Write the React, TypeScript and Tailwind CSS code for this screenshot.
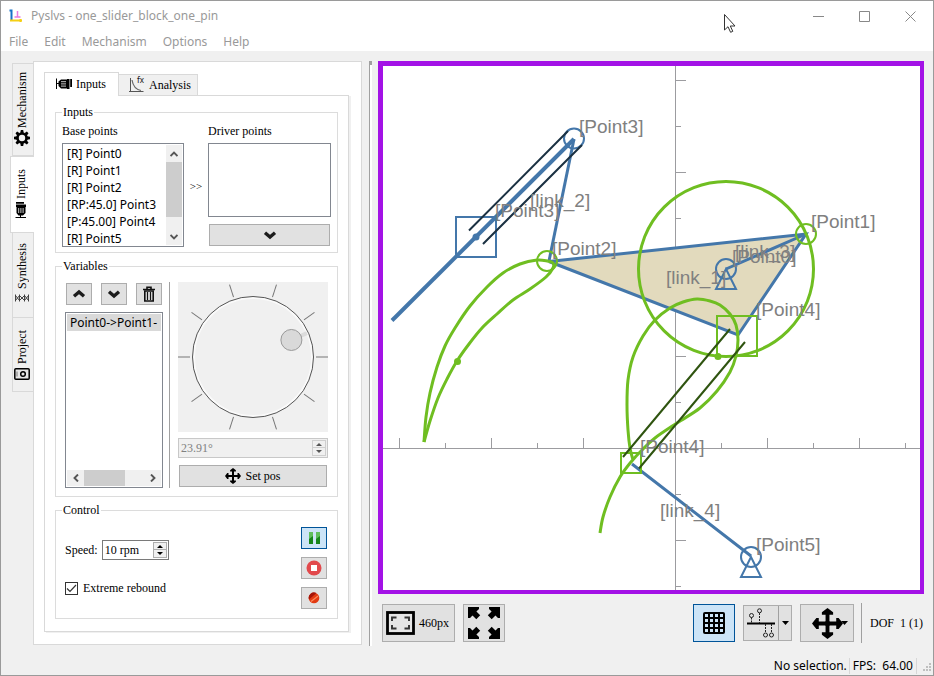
import React, { useState } from "react";
import type { ReactNode } from "react";

const sans = "font-['Noto_Sans','Open_Sans',sans-serif]";
const serif = "font-['Liberation_Serif','Noto_Sans_CJK_TC',serif]";

/* ---------- icons ---------- */

function LogoIcon() {
  return (
    <svg width="14" height="14" viewBox="0 0 14 14" aria-hidden="true">
      <path d="M0.500 1.500h3M2.500 1v11" stroke="#1773c8" strokeWidth="2" fill="none" />
      <path d="M1 11.500h12M11.500 10v3" stroke="#f5cf14" strokeWidth="2" fill="none" />
      <path d="M8.500 2v6M5.500 8h6" stroke="#e77be0" strokeWidth="1.500" fill="none" />
    </svg>
  );
}

function MotorIcon({ className = "" }: { className?: string }) {
  return (
    <svg width="16" height="12" viewBox="0 0 16 12" className={className} aria-hidden="true">
      <path d="M0.500 0.500v10.500M0.500 5.500h3" stroke="#000" fill="none" />
      <path d="M2.500 3.500L5 1.500h6.500v9H5L2.500 8z" fill="#000" />
      <path d="M5 3.700h5M5 5.900h5M5 8.100h5" stroke="#fff" strokeWidth="0.800" />
      <path d="M11 1h2.500v10H11zM14.200 1H16v8h-1.800z" fill="#000" />
    </svg>
  );
}

function GearIcon() {
  return (
    <svg width="16" height="16" viewBox="-8 -8 16 16" aria-hidden="true">
      <circle r="4.500" fill="none" stroke="#000" strokeWidth="2.600" />
      {[0, 45, 90, 135, 180, 225, 270, 315].map((a) => (
        <path key={a} d="M-1.700 -5L-1.200 -8h2.400L1.700 -5z" transform={`rotate(${a})`} fill="#000" />
      ))}
    </svg>
  );
}

function LinkageIcon() {
  return (
    <svg width="14" height="8" viewBox="0 0 14 8" aria-hidden="true">
      <path d="M0.500 0.500v7M13.500 0.500v7M4.500 0.500v7M9.500 0.500v7M0.500 1.500L4.500 6.500M0.500 6.500L4.500 1.500M9.500 1.500l4 5M9.500 6.500l4-5M4.500 1.500L7 4l2.500-2.500M4.500 6.500L7 4l2.500 2.500" stroke="#333" strokeWidth="0.900" fill="none" />
    </svg>
  );
}

function ProjectIcon() {
  return (
    <svg width="16" height="12" viewBox="0 0 16 12" aria-hidden="true">
      <rect x="0.800" y="0.800" width="14.400" height="10.400" rx="1" fill="#e6e6e6" stroke="#000" strokeWidth="1.500" />
      <circle cx="9" cy="6" r="2.300" fill="none" stroke="#000" strokeWidth="1.500" />
      <path d="M3 3.500v5" stroke="#777" strokeWidth="1" />
    </svg>
  );
}

function ChartIcon() {
  return (
    <svg width="16" height="16" viewBox="0 0 16 16" className="overflow-visible" aria-hidden="true">
      <path d="M1.500 1v13.500M0 14.500h14.500" stroke="#555" fill="none" />
      <path d="M3 3c1 6 3.500 9.500 9 10.500" stroke="#666" strokeWidth="1.200" fill="none" />
      <text x="8" y="6" fontSize="8" fontFamily="Noto Sans, sans-serif" fill="#111">fx</text>
    </svg>
  );
}

function Chevron({ up = false }: { up?: boolean }) {
  return (
    <svg width="14" height="10" viewBox="0 0 14 10" aria-hidden="true">
      <path d={up ? "M2 7.200L7 3l5 4.200" : "M2 2.800L7 7l5-4.200"} stroke="#1c1c1c" strokeWidth="3.400" fill="none" />
    </svg>
  );
}

function ThinArrow({ className = "" }: { className?: string }) {
  return (
    <svg width="8" height="8" viewBox="0 0 8 8" className={className} aria-hidden="true">
      <path d="M0.500 6L4 2.500l3.500 3.500" stroke="#555" strokeWidth="1.900" fill="none" />
    </svg>
  );
}

function TrashIcon() {
  return (
    <svg width="12" height="16" viewBox="0 0 12 16" aria-hidden="true">
      <path d="M0 3.500h12M4 3V1.200h4V3" stroke="#111" strokeWidth="1.600" fill="none" />
      <path d="M1.800 5h8.400v10H1.800z" stroke="#111" strokeWidth="1.600" fill="none" />
      <path d="M4.500 6v8M7.500 6v8" stroke="#111" strokeWidth="1.200" />
    </svg>
  );
}

function MoveIcon({ size }: { size: number }) {
  return (
    <svg width={size} height={size} viewBox="-16 -16 32 32" aria-hidden="true">
      {[0, 90, 180, 270].map((a) => (
        <path key={a} d="M-2 2V-9h-3.800v-2.500L0 -16l5.800 4.500V-9H2V2z" transform={`rotate(${a})`} fill="#000" />
      ))}
    </svg>
  );
}

function FitIcon() {
  return (
    <svg width="29" height="24" viewBox="0 0 29 24" aria-hidden="true">
      <rect x="1.500" y="1.500" width="26" height="21" fill="#e6e6e6" stroke="#000" strokeWidth="2.800" />
      <path d="M6 10V6.500h4.500M18.500 6.500H23V10M23 14v3.500h-4.500M10.500 17.500H6V14" stroke="#333" strokeWidth="1.900" fill="none" />
    </svg>
  );
}

function ExpandIcon() {
  return (
    <svg width="32" height="32" viewBox="-16 -16 32 32" aria-hidden="true">
      {[0, 90, 180, 270].map((a) => (
        <path key={a} d="M-16 -16h11v2l-2.600 2.500 3.800 3.800-3.900 3.900-3.800-3.800L-14 -5H-16z" transform={`rotate(${a})`} fill="#000" />
      ))}
    </svg>
  );
}

function GridIcon() {
  return (
    <svg width="22" height="22" viewBox="0 0 22 22" aria-hidden="true">
      <rect width="22" height="22" rx="2" fill="#000" />
      {[2, 7, 12, 17].map((y) =>
        [2, 7, 12, 17].map((x) => <rect key={`${x}-${y}`} x={x} y={y} width="3" height="3" fill="#cce4f7" />)
      )}
    </svg>
  );
}

function SequenceIcon() {
  return (
    <svg width="28" height="30" viewBox="0 0 28 30" aria-hidden="true">
      <path d="M0 15.500h28" stroke="#000" strokeWidth="2" />
      <g fill="none" stroke="#222">
        <path d="M4.500 9.500v6M12.500 5v10M18.500 16v8.500M24.500 16v8.500" strokeDasharray="2 1" />
        <circle cx="4.500" cy="7.500" r="2" />
        <circle cx="12.500" cy="2.800" r="2" />
        <circle cx="18.500" cy="27" r="2" />
        <circle cx="24.500" cy="27" r="2" />
      </g>
    </svg>
  );
}

function DropArrow() {
  return (
    <svg width="7" height="4" viewBox="0 0 7 4" aria-hidden="true">
      <path d="M0 0h7L3.500 4z" fill="#000" />
    </svg>
  );
}

/* ---------- small controls ---------- */

function PushButton({ label, className = "", children }: { label?: string; className?: string; children: ReactNode }) {
  return (
    <button
      type="button"
      aria-label={label}
      className={`flex items-center justify-center border border-[#adadad] bg-[#e1e1e1] ${className}`}
    >
      {children}
    </button>
  );
}

function SpinArrows({ color, border }: { color: string; border: string }) {
  return (
    <span className="flex w-3.5 flex-col">
      <button type="button" aria-label="Increase" className={`flex h-2 items-center justify-center border bg-[#f0f0f0] ${border}`}>
        <svg width="6" height="3" viewBox="0 0 6 3"><path d="M0 3h6L3 0z" fill={color} /></svg>
      </button>
      <button type="button" aria-label="Decrease" className={`flex h-2 items-center justify-center border border-t-0 bg-[#f0f0f0] ${border}`}>
        <svg width="6" height="3" viewBox="0 0 6 3"><path d="M0 0h6L3 3z" fill={color} /></svg>
      </button>
    </span>
  );
}

function Group({ title, className = "", children }: { title: string; className?: string; children: ReactNode }) {
  return (
    <fieldset className="min-w-0 border border-[#dcdcdc]">
      <legend className="ml-1.5 px-px leading-4">{title}</legend>
      <div className={className}>{children}</div>
    </fieldset>
  );
}

function SideTab({ title, icon, selected = false, className }: { title: string; icon: ReactNode; selected?: boolean; className: string }) {
  return (
    <button
      type="button"
      role="tab"
      aria-selected={selected}
      className={`flex flex-col items-center border-[#d9d9d9] ${
        selected ? "z-10 -mr-px w-6 border-y border-l bg-white pr-1" : "w-[21px] border-b border-l bg-[#f0f0f0] pr-0.5"
      } ${className}`}
    >
      <span className="rotate-180 leading-4 [writing-mode:vertical-rl]">{title}</span>
      {icon}
    </button>
  );
}

/* ---------- input panel ---------- */

const basePoints = ["[R] Point0", "[R] Point1", "[R] Point2", "[RP:45.0] Point3", "[P:45.00] Point4", "[R] Point5"];

function InputsGroup() {
  return (
    <Group title="Inputs" className="flex px-1.5 pt-[3px] pb-[5px]">
      <div className="flex w-[122px] flex-col gap-1">
        <span id="base-points" className="leading-4">Base points</span>
        <div className="flex h-[104px] border border-[#828790] bg-white p-px">
          <ul role="listbox" aria-labelledby="base-points" className={`min-w-0 flex-1 overflow-hidden ${sans}`}>
            {basePoints.map((p) => (
              <li key={p} role="option" aria-selected="false" className="pl-[3px] leading-[17px] whitespace-nowrap">
                {p}
              </li>
            ))}
          </ul>
          <div className="flex w-4 flex-col bg-[#f0f0f0]">
            <button type="button" aria-label="Scroll up" className="flex h-[17px] items-center justify-center"><ThinArrow /></button>
            <div className="h-[55px] bg-[#cdcdcd]" />
            <button type="button" aria-label="Scroll down" className="mt-auto flex h-[17px] items-center justify-center"><ThinArrow className="rotate-180" /></button>
          </div>
        </div>
      </div>
      <span className="w-6 self-center pt-0.5 text-center text-[11px]">&gt;&gt;</span>
      <div className="flex flex-1 flex-col">
        <span id="driver-points" className="leading-4">Driver points</span>
        <ul role="listbox" aria-labelledby="driver-points" className="mt-1 h-[74px] border border-[#828790] bg-white" />
        <PushButton label="Remove driver" className="mx-px mt-[7px] h-[22px]"><Chevron /></PushButton>
      </div>
    </Group>
  );
}

function Dial({ angle, onChange }: { angle: number; onChange: (v: number) => void }) {
  const rad = (angle * Math.PI) / 180;
  const cx = Math.cos(rad);
  const cy = -Math.sin(rad);
  return (
    <label className="relative block bg-[#f0f0f0]">
      <svg viewBox="-75 -75 150 150" className="block w-full" aria-hidden="true">
        <circle r="59" fill="none" stroke="#fafafa" strokeWidth="2" />
        <circle r="60.500" fill="none" stroke="#555" />
        {[0, 36, 72, 108, 144, 180, 216, 252, 288, 324].map((a) => (
          <path key={a} d="M63 0H76" stroke="#777" transform={`rotate(${a})`} />
        ))}
        <path d={`M${cx * 50} ${cy * 50}L${cx * 59} ${cy * 59}`} stroke="#dcdcdc" strokeWidth="4" />
        <circle cx={cx * 42} cy={cy * 42} r="10.500" fill="#d9d9d9" stroke="#999" />
      </svg>
      <input
        type="range"
        aria-label="Angle"
        min="0"
        max="360"
        step="0.01"
        value={angle}
        onChange={(e) => onChange(Number(e.target.value))}
        className="absolute inset-0 h-full w-full opacity-0"
      />
    </label>
  );
}

function VariablesGroup() {
  const [angle, setAngle] = useState(23.91);
  return (
    <Group title="Variables" className="flex px-[9px] py-2">
      <div className="flex w-[98px] flex-col gap-[7px] pt-px">
        <div className="flex justify-between px-px">
          <PushButton label="Move up" className="h-[22px] w-[26px]"><Chevron up /></PushButton>
          <PushButton label="Move down" className="h-[22px] w-[26px]"><Chevron /></PushButton>
          <PushButton label="Delete" className="h-[22px] w-[26px]"><TrashIcon /></PushButton>
        </div>
        <div className="flex flex-1 flex-col border border-[#828790] bg-white p-px">
          <ul role="listbox" aria-label="Variables" className={`min-h-0 flex-1 overflow-hidden ${sans}`}>
            <li role="option" aria-selected="true" className="overflow-hidden bg-[#d9d9d9] pl-[3px] leading-[17px] whitespace-nowrap">
              Point0-&gt;Point1-
            </li>
          </ul>
          <div className="flex h-4 bg-[#f0f0f0]">
            <button type="button" aria-label="Scroll left" className="flex w-[17px] items-center justify-center"><ThinArrow className="-rotate-90" /></button>
            <div className="w-[41px] bg-[#cdcdcd]" />
            <button type="button" aria-label="Scroll right" className="ml-auto flex w-[17px] items-center justify-center"><ThinArrow className="rotate-90" /></button>
          </div>
        </div>
      </div>
      <div className="mr-2 ml-1.5 w-px bg-[#a0a0a0]" />
      <div className="flex flex-1 flex-col">
        <Dial angle={angle} onChange={setAngle} />
        <div className="mt-1.5 flex h-5 items-center border border-[#c8c8c8] bg-[#f0f0f0] pr-px">
          <input aria-label="Angle value" disabled value={`${angle.toFixed(2)}°`} readOnly className="w-0 flex-1 bg-transparent pl-0.5 leading-4 text-[#808080]" />
          <SpinArrows color="#555" border="border-[#cfcfcf]" />
        </div>
        <PushButton className="mx-px mt-[7px] mb-px h-[22px] gap-1">
          <MoveIcon size={16} />
          Set pos
        </PushButton>
      </div>
    </Group>
  );
}

function ControlGroup() {
  const [rebound, setRebound] = useState(true);
  return (
    <Group title="Control" className="flex justify-between py-[9px] pr-2.5 pl-[9px]">
      <div className="flex flex-col gap-5 pt-[13px]">
        <div className="flex items-center gap-1">
          <label htmlFor="speed">Speed:</label>
          <div className="flex h-5 w-[67px] items-center border border-[#7a7a7a] bg-white pr-px">
            <input id="speed" defaultValue="10 rpm" className="w-0 flex-1 bg-transparent pl-0.5 leading-4 outline-none" />
            <SpinArrows color="#000" border="border-[#adadad]" />
          </div>
        </div>
        <label className="flex items-center gap-[5px] leading-4">
          <span className="relative flex h-[13px] w-[13px]">
            <input type="checkbox" checked={rebound} onChange={() => setRebound(!rebound)} className="h-full w-full appearance-none border border-[#333] bg-white" />
            {rebound && (
              <svg viewBox="0 0 13 13" className="pointer-events-none absolute inset-0" aria-hidden="true">
                <path d="M2 6.500L5 9.500l6-6.500" stroke="#333" strokeWidth="1.200" fill="none" />
              </svg>
            )}
          </span>
          Extreme rebound
        </label>
      </div>
      <div className="flex flex-col gap-2">
        <button type="button" aria-label="Pause" className="flex h-[22px] w-[26px] items-center justify-center border border-[#005499] bg-[#cce4f7]">
          <svg width="11" height="12" viewBox="0 0 11 12">
            <path d="M0 0h4v12H0zM7 0h4v12H7z" fill="#5fbf5c" />
            <path d="M0 7l4-3v8H0zM7 7l4-3v8H7z" fill="#15851a" />
          </svg>
        </button>
        <PushButton label="Stop" className="h-[22px] w-[26px]">
          <svg width="16" height="16" viewBox="0 0 16 16">
            <circle cx="8" cy="8" r="7.500" fill="#e2494c" />
            <rect x="5" y="5" width="6" height="6" fill="#fff" />
          </svg>
        </PushButton>
        <PushButton label="Record" className="h-[22px] w-[26px]">
          <svg width="12" height="12" viewBox="0 0 12 12">
            <circle cx="6" cy="6" r="5.300" fill="#e23a12" />
            <path d="M1 7.500L8.500 1A5.300 5.300 0 0 0 1 7.500z" fill="#a61508" />
            <path d="M3 9.500L10 4" stroke="#ff8a5c" strokeWidth="1.200" />
          </svg>
        </PushButton>
      </div>
    </Group>
  );
}

/* ---------- canvas ---------- */

type Pt = [number, number];

function smooth(points: Pt[]) {
  let d = `M${points[0][0]} ${points[0][1]}`;
  for (let i = 0; i < points.length - 1; i++) {
    const p0 = points[Math.max(i - 1, 0)];
    const p1 = points[i];
    const p2 = points[i + 1];
    const p3 = points[Math.min(i + 2, points.length - 1)];
    d += `C${p1[0] + (p2[0] - p0[0]) / 6} ${p1[1] + (p2[1] - p0[1]) / 6} ${p2[0] - (p3[0] - p1[0]) / 6} ${p2[1] - (p3[1] - p1[1]) / 6} ${p2[0]} ${p2[1]}`;
  }
  return d;
}

const point2Out: Pt[] = [[548, 261], [537, 260], [520, 264], [503, 273], [487, 287], [470, 306], [455, 328], [445, 346], [437, 367], [430, 393], [426, 417], [424, 442]];
const point2Back: Pt[] = [[424, 442], [430, 421], [438, 398], [447, 379], [457, 361], [469, 344], [482, 328], [497, 314], [513, 300], [530, 289], [546, 277], [553, 268], [553, 263], [548, 261]];
const point4Path: Pt[] = [
  [600, 533], [603, 517], [610, 497], [620, 477], [631, 462], [642, 450], [655, 438], [677, 423], [700, 408], [717, 391], [730, 372],
  [736, 356], [738, 340], [736, 325], [730, 314], [720, 305], [710, 301], [697, 299], [683, 302], [670, 308], [655, 320], [643, 336],
  [633, 357], [628, 380], [627, 405], [628, 430], [630, 448], [633, 460],
];

const labels: [string, number, number][] = [
  ["[Point3]", 579, 133],
  ["[link_2]", 530, 207],
  ["[Point3]", 495, 217],
  ["[Point2]", 552, 255],
  ["[Point1]", 811, 228],
  ["[link_3]", 735, 258],
  ["[Point0]", 732, 263],
  ["[link_1]", 666, 284],
  ["[Point4]", 756, 316],
  ["[Point4]", 640, 453],
  ["[link_4]", 660, 517],
  ["[Point5]", 756, 551],
];

const xTicks = [399, 445, 491, 537, 583, 629, 721, 767, 813, 859, 905];
const yTicks = [80, 126, 172, 218, 264, 310, 356, 402, 494, 540, 586];

function MechanismCanvas() {
  return (
    <div className="min-h-0 flex-1 border-t-[5px] border-r-4 border-b-4 border-l-[5px] border-[#a312e6] bg-white">
      <svg viewBox="383 66 537 524" className="block h-full w-full" role="img" aria-label="Mechanism">
        <g fill="none">
          <g stroke="#9c9ca0" strokeWidth="1" shapeRendering="crispEdges">
            <path d="M383 448.500H920M675.500 66V590" />
            {xTicks.map((x, i) => (
              <path key={x} d={`M${x + 0.5} 448V${[0, 2, 4, 7, 9].includes(i) ? 438 : 443}`} />
            ))}
            {yTicks.map((y, i) => (
              <path key={y} d={`M676 ${y + 0.5}H${[0, 2, 4, 6, 9].includes(i) ? 686 : 681}`} />
            ))}
          </g>
          <g stroke="#4477aa" strokeWidth="3">
            <path d="M549 261.500L806 234L738 335z" fill="#e2dabd" />
            <path d="M574 139L549 261" />
            <path d="M392 320.500L574 139" strokeWidth="4" />
            <path d="M726 269L806 234M632 464L751 556" />
          </g>
          <g stroke="#4477aa" strokeWidth="2">
            <rect x="456" y="217" width="40" height="40" />
            <circle cx="574" cy="138.500" r="10" />
            <circle cx="726" cy="269" r="10" />
            <path d="M726 269L716 289H736z" />
            <circle cx="751" cy="557" r="10" />
            <path d="M751 557L741 577H761z" />
          </g>
          <circle cx="476" cy="237" r="3.500" fill="#4477aa" />
          <g stroke="#1b3142" strokeWidth="2">
            <path d="M469 230.500L568 131M483 244L582 145" />
          </g>
          <g stroke="#6fbe21" strokeWidth="3">
            <circle cx="726" cy="269" r="87.500" />
            <path d={smooth(point2Out)} />
            <path d={smooth(point2Back)} />
            <path d={smooth(point4Path)} />
          </g>
          <g stroke="#6fbe21" strokeWidth="2">
            <circle cx="806" cy="234" r="10" />
            <circle cx="547" cy="261" r="10" />
            <rect x="717" y="316" width="40" height="40" />
            <rect x="621" y="453" width="20" height="20" />
          </g>
          <circle cx="457.500" cy="361.500" r="3.500" fill="#6fbe21" />
          <circle cx="718" cy="356.500" r="3.500" fill="#6fbe21" />
          <g stroke="#2f5410" strokeWidth="2">
            <path d="M623 457L730 329M639 468.500L745 342" />
          </g>
        </g>
        <g fill="#808080" fontSize="19" fontFamily="Liberation Sans, Arial, sans-serif">
          {labels.map(([t, x, y]) => (
            <text key={`${t}${x}`} x={x} y={y}>{t}</text>
          ))}
        </g>
      </svg>
    </div>
  );
}

function ViewToolbar() {
  return (
    <div className="mt-[9px] mb-[13px] flex h-10 items-center gap-2 pl-1">
      <PushButton className="h-[38px] w-[73px] gap-1 pr-0.5">
        <FitIcon />
        460px
      </PushButton>
      <PushButton label="Zoom to fit" className="h-[38px] w-[42px]"><ExpandIcon /></PushButton>
      <button type="button" aria-label="Grid" aria-pressed="true" className="ml-auto flex h-[38px] w-[42px] items-center justify-center border border-[#005499] bg-[#cce4f7]">
        <GridIcon />
      </button>
      <div className="flex h-9 w-[49px] border border-[#adadad] bg-[#e1e1e1]">
        <button type="button" aria-label="Sequence" className="flex flex-1 items-center justify-center border-r border-[#a0a0a0]"><SequenceIcon /></button>
        <button type="button" aria-label="Sequence options" className="flex w-3 items-center justify-center"><DropArrow /></button>
      </div>
      <PushButton label="Move" className="relative h-[38px] w-[54px]">
        <MoveIcon size={31} />
        <span className="absolute right-[5px]"><DropArrow /></span>
      </PushButton>
      <div className="ml-[-1px] h-10 w-px bg-[#a0a0a0]" />
      <span className="pr-px whitespace-pre">DOF  1 (1)</span>
    </div>
  );
}

/* ---------- window ---------- */

export default function App() {
  return (
    <div className={`flex h-screen flex-col border border-[#9a9a9a] bg-[#f0f0f0] text-xs text-black ${serif}`}>
      <header className={`bg-white text-[#999] ${sans}`}>
        <div className="flex h-[30px] items-center pl-2">
          <LogoIcon />
          <h1 className="ml-2">Pyslvs - one_slider_block_one_pin</h1>
          <div className="ml-auto flex gap-[35px] pr-[17px] text-[#888]">
            <button type="button" aria-label="Minimize"><svg width="11" height="11" viewBox="0 0 11 11"><path d="M0 5.500h11" stroke="currentColor" /></svg></button>
            <button type="button" aria-label="Maximize"><svg width="11" height="11" viewBox="0 0 11 11"><path d="M0.500 0.500h10v10h-10z" stroke="currentColor" fill="none" /></svg></button>
            <button type="button" aria-label="Close"><svg width="11" height="11" viewBox="0 0 11 11"><path d="M0.500 0.500l10 10M10.500 0.500l-10 10" stroke="currentColor" /></svg></button>
          </div>
        </div>
        <nav className="flex h-5 items-center gap-4 pt-0.5 pl-2">
          {["File", "Edit", "Mechanism", "Options", "Help"].map((m) => (
            <button key={m} type="button">{m}</button>
          ))}
        </nav>
      </header>

      <main className="flex min-h-0 flex-1 pt-2.5 pr-[9px]">
        <div role="tablist" aria-label="Panels" className="flex w-8 shrink-0 flex-col items-end pt-0.5">
          <SideTab title="Mechanism" icon={<GearIcon />} className="h-[93px] gap-0.5 border-t pt-2" />
          <SideTab title="Inputs" selected icon={<span className="flex h-[18px] items-center"><MotorIcon className="-rotate-90" /></span>} className="h-[77px] gap-0.5 pt-3" />
          <SideTab title="Synthesis" icon={<LinkageIcon />} className="h-[85px] gap-[5px] pt-2.5" />
          <SideTab title="Project" icon={<ProjectIcon />} className="h-[74px] gap-1 pt-3" />
        </div>

        <section className="mb-2.5 w-[329px] shrink-0 self-start border border-[#d9d9d9] bg-white px-2.5 pt-2.5 pb-3">
          <div role="tablist" aria-label="Input views" className="flex items-end">
            <button type="button" role="tab" aria-selected="true" className="z-10 -mb-px flex h-6 items-center gap-1 border border-b-0 border-[#d9d9d9] bg-white pr-3 pb-0.5 pl-[11px]">
              <MotorIcon />
              Inputs
            </button>
            <button type="button" role="tab" aria-selected="false" className="flex h-[21px] items-center gap-1 border border-b-0 border-l-0 border-[#d9d9d9] bg-[#f0f0f0] pr-1.5 pl-2.5">
              <ChartIcon />
              Analysis
            </button>
          </div>
          <div className="mr-0.5 flex flex-col gap-[5px] border border-[#d9d9d9] px-2.5 pt-2 pb-3 shadow-[2px_1px_0_#f0f0f0]">
            <InputsGroup />
            <VariablesGroup />
            <ControlGroup />
          </div>
        </section>

        <div className="mr-1.5 mb-2.5 ml-[7px] w-[3px] shrink-0 border-t-4 border-l border-[#a0a0a0] bg-white" />

        <section className="flex min-w-0 flex-1 flex-col">
          <MechanismCanvas />
          <ViewToolbar />
        </section>
      </main>

      <footer className={`flex h-[19px] shrink-0 items-center justify-end ${sans}`}>
        <span className="pr-0.5">No selection.</span>
        <span className="border-x border-[#d7d7d7] px-[3px] leading-4 whitespace-pre">FPS:  64.00</span>
        <svg width="10" height="10" viewBox="0 0 10 10" className="mt-1 ml-1.5" aria-hidden="true">
          <path d="M6 0h2v2H6zM3 3h2v2H3zM6 3h2v2H6zM0 6h2v2H0zM3 6h2v2H3zM6 6h2v2H6z" fill="#bfbfbf" />
        </svg>
      </footer>

      <svg width="12" height="19" viewBox="0 0 12 19" className="pointer-events-none absolute top-3.5 left-[724px]" aria-hidden="true">
        <path d="M0.500 0.500v15.500l3.500-3.300 2.600 5.600 2.200-1-2.500-5.300H11z" fill="#fff" stroke="#333" />
      </svg>
    </div>
  );
}
